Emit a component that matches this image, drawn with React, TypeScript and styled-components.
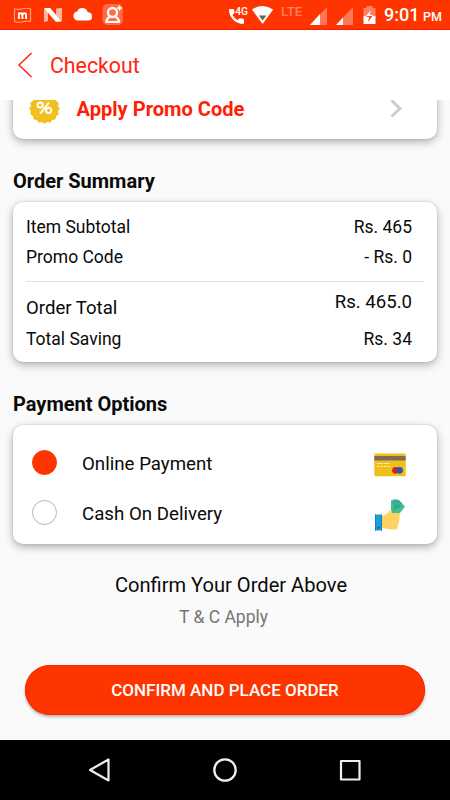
import React from "react";
import styled, { createGlobalStyle } from "styled-components";

const RED = "#ff3500";

const GlobalStyle = createGlobalStyle`
  * { box-sizing: border-box; }
  body { margin: 0; font-family: Roboto, "Liberation Sans", sans-serif; color: #0a0a0a; }
`;

const Screen = styled.div`
  width: 450px;
  height: 800px;
  display: flex;
  flex-direction: column;
  overflow: hidden;
  background: #fafafa;
`;

const StatusBar = styled.div`
  height: 30px;
  flex: none;
  display: flex;
  align-items: center;
  background: ${RED};
  border-bottom: 1px solid #ff1a00;
  color: #fff;
  svg { display: block; }
`;

const Clock = styled.span`
  width: 66px;
  font-size: 18px;
  font-weight: 500;
  line-height: 30px;
  padding-top: 3px;
  white-space: nowrap;
  small { font-size: 12.500px; margin-left: -1px; }
`;

const AppBar = styled.header`
  height: 70px;
  flex: none;
  display: flex;
  align-items: center;
  gap: 17px;
  padding-left: 17px;
  background: #fff;
  color: #ff2510;
`;

const Title = styled.h1`
  margin: 2px 0 0;
  font-size: 21.3px;
  font-weight: 400;
  line-height: 30px;
`;

const Content = styled.main`
  height: 640px;
  flex: none;
  overflow: hidden;
  padding: 0 13px;
`;

const Card = styled.section<{ $height: number }>`
  height: ${(p) => p.$height}px;
  background: #fff;
  border-radius: 10px;
  box-shadow: 0 0 2px rgba(0, 0, 0, 0.16), 0 3px 9px rgba(0, 0, 0, 0.3);
`;

const PromoCard = styled(Card)`
  margin-top: -22px;
  display: flex;
  align-items: center;
  padding: 0 34px 0 16px;
`;

const PromoLabel = styled.span`
  flex: 1;
  margin-left: 16.5px;
  font-size: 20.1px;
  line-height: 16px;
  font-weight: 700;
  color: #ff1e05;
`;

const SectionTitle = styled.h2<{ $top: number }>`
  margin: ${(p) => p.$top}px 0 6px;
  font-size: 20px;
  font-weight: 700;
  line-height: 30px;
`;

const SummaryCard = styled(Card)`
  padding: 10px 13px 0;
`;

const SummaryRow = styled.div<{ $size?: number }>`
  display: flex;
  justify-content: space-between;
  padding-right: 12px;
  font-size: ${(p) => p.$size ?? 17.5}px;
  line-height: 30px;
`;

const Divider = styled.hr`
  height: 1px;
  margin: 9px 0 5px;
  border: 0;
  background: #e2e2e2;
`;

const TotalAmount = styled.span`
  padding-bottom: 7px;
`;

const TotalLabel = styled.span`
  padding-top: 6px;
`;

const PaymentCard = styled(Card)`
  padding: 13px 31px 0 19px;
`;

const Option = styled.label`
  height: 50px;
  display: flex;
  align-items: center;
  font-size: 18.7px;
`;

const Radio = styled.span<{ $on?: boolean }>`
  width: 25px;
  height: 25px;
  margin-bottom: 1px;
  border-radius: 50%;
  border: 1px solid ${(p) => (p.$on ? RED : "#b5b5ae")};
  background: ${(p) => (p.$on ? RED : "#fff")};
`;

const OptionLabel = styled.span`
  flex: 1;
  margin: 2px 0 0 25px;
`;

const OptionIcon = styled.span<{ $drop: number }>`
  display: flex;
  padding-top: ${(p) => p.$drop}px;
`;

const Confirm = styled.p`
  margin: 26px 0 0 12px;
  text-align: center;
  font-size: 20.1px;
  line-height: 30px;
`;

const Terms = styled.p`
  margin: 2px 3px 0 0;
  text-align: center;
  font-size: 17.5px;
  line-height: 30px;
  color: #757575;
`;

const PlaceOrder = styled.button`
  display: block;
  width: 400px;
  height: 50px;
  margin: 33px 12px 0;
  padding: 0;
  border: 0;
  border-radius: 25px;
  background: ${RED};
  box-shadow: inset 0 0 0 1px #ff2200, 0 2px 3px rgba(0, 0, 0, 0.28);
  color: #fff;
  font: 500 17px/50px Roboto, "Liberation Sans", sans-serif;
`;

const NavBar = styled.nav`
  height: 60px;
  flex: none;
  background: #000;
  display: flex;
  align-items: center;
  justify-content: center;
  gap: 101px;
`;

const LeftIcons = () => (
  <svg width="225" height="29" viewBox="0 0 225 29" fill="#fff">
    <path d="M14.500 9q4 1 8-.2t8 .2v12.500q-4-1-8 .3t-8-.3z" fill="none" stroke="#ff9b7e" strokeWidth="1.200" />
    <path d="M18.900 19v-6.500M18.900 15c0-2.200 3.500-2.200 3.500 0v4m0-4c0-2.200 3.700-2.200 3.700 0v4" fill="none" stroke="#fff" strokeWidth="2" />
    <path d="M44 9l4-1v13l-4 1zM56 8.500l6-.5v13l-6 1z" fill="#ffb5a0" />
    <path d="M44 8h6.200l11.300 13.500h-6z" />
    <path d="M77.500 20.500a4.600 4.600 0 0 1-.2-9.100 5.500 5.500 0 0 1 10.400.9 4.100 4.100 0 0 1 .5 8.200z" />
    <rect x="102.500" y="4" width="20.500" height="21" rx="5" fill="#ff6a42" />
    <circle cx="112.500" cy="12.500" r="4.500" fill="none" stroke="#fff" strokeWidth="2.400" />
    <path d="M109.800 17q-3 1-3.600 5h13q-.6-4-3.600-5" fill="none" stroke="#fff" strokeWidth="2.200" strokeLinejoin="round" />
    <path d="M119.500 5.500v5M117 8h5" stroke="#fff" strokeWidth="1.700" />
  </svg>
);

const SvgLabel = styled.text`
  font-family: Roboto, "Liberation Sans", sans-serif;
  font-weight: 500;
`;

const RightIcons = () => (
  <svg width="159" height="29" viewBox="225 0 159 29" fill="#fff">
    <path d="M230 9h3.200q1.300 0 1.300 4l-2 2q2 3.500 5 5l2.200-1.800q4.300.3 4.300 1.300v3.200q0 1.300-1.500 1.300C235 23.500 229 17 229 10q0-1 1-1z" />
    <SvgLabel x="235.200" y="15" fontSize="10.200">4G</SvgLabel>
    <path d="M252 9.500q10.500-7 21.200 0L262.600 24z" />
    <path d="M258.800 15.500h7.600l-3.800 5z" fill="#75604f" />
    <SvgLabel x="281" y="16" fontSize="13.500" fill="#ff8060">LTE</SvgLabel>
    <path d="M327 7v18h-17z" fill="#ff7658" />
    <path d="M320 14v11h-10z" />
    <path d="M353 7v18h-17z" fill="#ff7658" />
    <path d="M343 17.500v7.500h-7z" />
    <path d="M363.500 8h3V6h6v2h3v10h-12z" fill="#ff8060" />
    <path d="M363.500 16h12v8h-12z" />
    <path d="M371 10l-5 6.800h3.300L368 22l5-7h-3.200z" fill={RED} />
    <path d="M371 10l-5 6h6.300l.7-1h-3.200z" />
  </svg>
);

const badge = Array.from({ length: 32 }, (_, i) => {
  const a = (i * Math.PI) / 16;
  const r = i % 2 ? 13.8 : 15.3;
  return `${16 + r * Math.cos(a)},${16 + r * Math.sin(a)}`;
}).join(" ");

const PercentBadge = () => (
  <svg width="31" height="31" viewBox="0 0 32 32">
    <polygon points={badge} fill="#efc01f" stroke="#efc01f" strokeLinejoin="round" />
    <g fill="none" stroke="#fff" strokeWidth="2">
      <circle cx="11.500" cy="12.500" r="2.700" />
      <circle cx="20.300" cy="18" r="2.700" />
      <path d="M20.500 10l-9 11.500" />
    </g>
  </svg>
);

const CardIcon = () => (
  <svg width="32" height="24" viewBox="0 0 32 24">
    <rect x=".3" y=".5" width="31.400" height="22.800" rx="1" fill="#efc01c" />
    <rect x=".3" y="3" width="31.400" height="4.500" fill="#806b55" />
    <path d="M3 10.500h13" stroke="#fbe9ae" strokeDasharray="6 .6" />
    <path d="M3 13.500h13" stroke="#fbe9ae" strokeDasharray="2.500 1" />
    <circle cx="21.500" cy="17.300" r="3.400" fill="#dd1f1a" />
    <circle cx="25.500" cy="17.300" r="3.400" fill="#2658a8" />
  </svg>
);

const CashIcon = () => (
  <svg width="32" height="32" viewBox="0 0 32 32">
    <path d="M17 1.500q4-2 8-.5l6 6.500-5 6.500h-9z" fill="#42bd98" />
    <path d="M18.500 5l3-3 6 2M19.500 12l2-4 6-1" fill="none" stroke="#2a9d7d" />
    <circle cx="23" cy="7" r="2.200" fill="none" stroke="#2a9d7d" />
    <path d="M7.500 17l5-2 4-4q1.500-1 1.500 3h7.500q1.200 1 0 3 1 1.500-.3 3.500.5 2-.7 3.500.3 2-1 3.500 0 2.500-2 3Q14 31 7.500 28.500z" fill="#fbd263" />
    <rect x="1" y="15.500" width="7" height="16" fill="#1b9cdb" />
    <path d="M1.500 15.500v16M7.500 15.500v16" stroke="#1680b9" />
    <circle cx="4.500" cy="28.800" r="1" fill="#134f75" />
  </svg>
);

export default function App() {
  return (
    <Screen>
      <GlobalStyle />
      <StatusBar>
        <LeftIcons />
        <RightIcons />
        <Clock>9:01 <small>PM</small></Clock>
      </StatusBar>
      <AppBar>
        <svg width="16" height="26" viewBox="0 0 16 26" fill="none">
          <path d="M14.500 1L2 13l12.500 12" stroke="currentColor" strokeWidth="1.500" />
        </svg>
        <Title>Checkout</Title>
      </AppBar>
      <Content>
        <PromoCard $height={61}>
          <PercentBadge />
          <PromoLabel>Apply Promo Code</PromoLabel>
          <svg width="14" height="20" viewBox="0 0 14 20" fill="none">
            <path d="M2.500 1.500l8.500 8-8.500 8" stroke="#ccc" strokeWidth="3" />
          </svg>
        </PromoCard>
        <SectionTitle $top={27}>Order Summary</SectionTitle>
        <SummaryCard $height={160}>
          <SummaryRow><span>Item Subtotal</span><span>Rs. 465</span></SummaryRow>
          <SummaryRow><span>Promo Code</span><span>- Rs. 0</span></SummaryRow>
          <Divider />
          <SummaryRow $size={18.6}>
            <TotalLabel>Order Total</TotalLabel>
            <TotalAmount>Rs. 465.0</TotalAmount>
          </SummaryRow>
          <SummaryRow><span>Total Saving</span><span>Rs. 34</span></SummaryRow>
        </SummaryCard>
        <SectionTitle $top={27}>Payment Options</SectionTitle>
        <PaymentCard $height={119}>
          <Option>
            <Radio $on />
            <OptionLabel>Online Payment</OptionLabel>
            <OptionIcon $drop={4}><CardIcon /></OptionIcon>
          </Option>
          <Option>
            <Radio />
            <OptionLabel>Cash On Delivery</OptionLabel>
            <OptionIcon $drop={4}><CashIcon /></OptionIcon>
          </Option>
        </PaymentCard>
        <Confirm>Confirm Your Order Above</Confirm>
        <Terms>T &amp; C Apply</Terms>
        <PlaceOrder>CONFIRM AND PLACE ORDER</PlaceOrder>
      </Content>
      <NavBar>
        <svg width="24" height="24" viewBox="0 0 24 24" fill="none" stroke="#eee" strokeWidth="2.200" strokeLinejoin="round">
          <path d="M20.500 1.500v21L2 12z" />
        </svg>
        <svg width="24" height="24" viewBox="0 0 24 24" fill="none" stroke="#eee" strokeWidth="2.300">
          <circle cx="12" cy="12" r="10.700" />
        </svg>
        <svg width="24" height="24" viewBox="0 0 24 24" fill="none" stroke="#eee" strokeWidth="2.200" strokeLinejoin="round">
          <rect x="3" y="3" width="18.500" height="18.500" />
        </svg>
      </NavBar>
    </Screen>
  );
}
